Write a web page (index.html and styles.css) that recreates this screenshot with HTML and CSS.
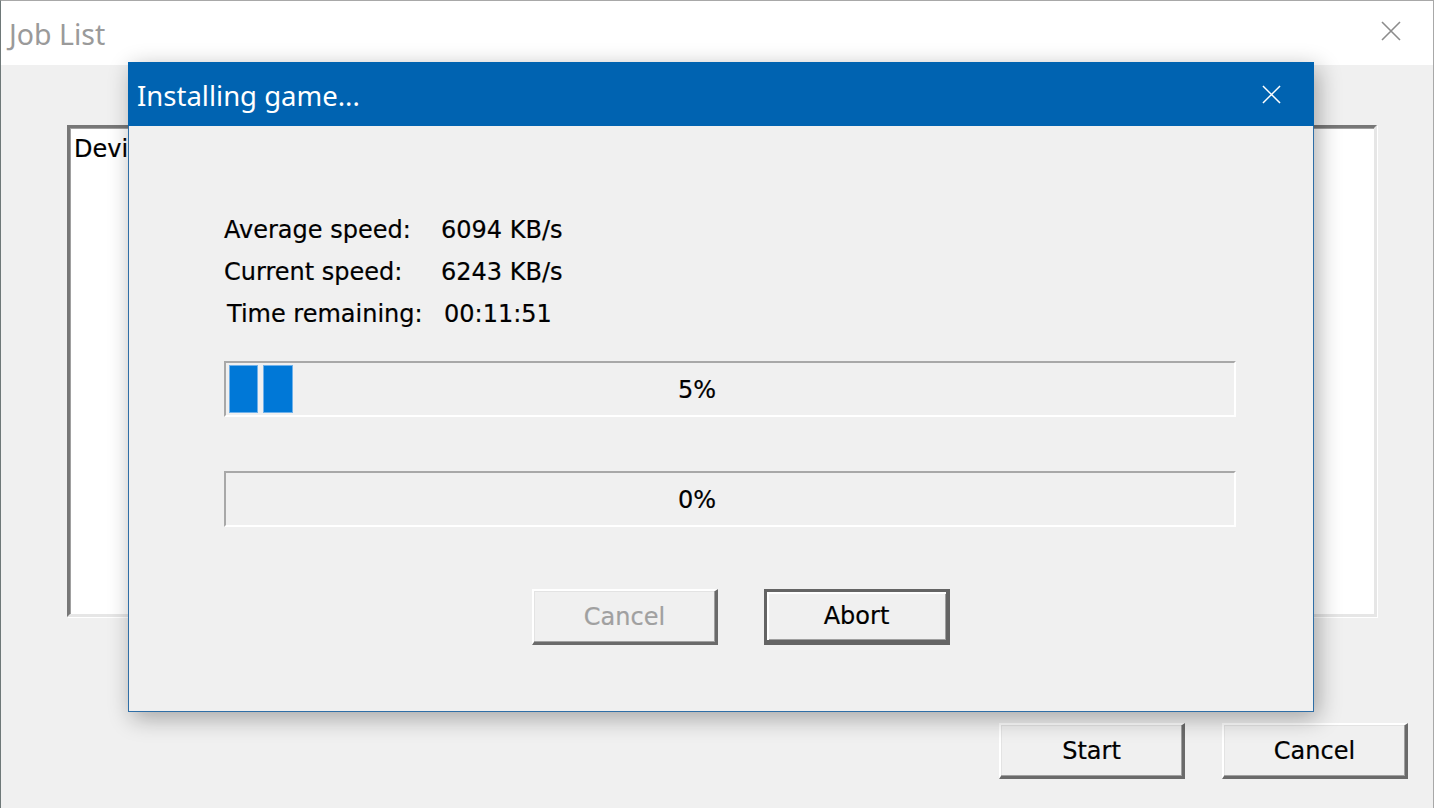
FILE: index.html
```html
<!DOCTYPE html>
<html lang="en">
<head>
<meta charset="utf-8">
<title>Job List</title>
<link rel="stylesheet" href="styles.css">
</head>
<body>
<div class="window">
  <div class="titlebar">
    <span class="title">Job List</span>
    <svg class="close" viewBox="0 0 20 20" width="20" height="20"><path d="M1 1L19 19M19 1L1 19" stroke="#8c8c8c" stroke-width="1.6" fill="none"/></svg>
  </div>
  <div class="client">
    <div class="listbox"><span class="list-item">Device</span></div>
    <div class="actions">
      <button class="btn">Start</button>
      <button class="btn">Cancel</button>
    </div>
  </div>

  <div class="dialog">
    <div class="dlg-titlebar">
      <span class="dlg-title">Installing game...</span>
      <svg class="dlg-close" viewBox="0 0 20 20" width="19" height="19"><path d="M1 1L19 19M19 1L1 19" stroke="#ffffff" stroke-width="1.6" fill="none"/></svg>
    </div>
    <div class="dlg-body">
      <div class="stats">
        <span class="label">Average speed:</span><span class="value">6094 KB/s</span>
        <span class="label">Current speed:</span><span class="value">6243 KB/s</span>
        <span class="label shift">Time remaining:</span><span class="value shift">00:11:51</span>
      </div>
      <div class="progress">
        <div class="blocks"><span class="block"></span><span class="block wide"></span></div>
        <span class="pct">5%</span>
      </div>
      <div class="progress second">
        <span class="pct">0%</span>
      </div>
      <div class="dlg-actions">
        <button class="btn disabled">Cancel</button>
        <button class="btn default">Abort</button>
      </div>
    </div>
  </div>
</div>
</body>
</html>
```

FILE: styles.css
```css
html, body {
  margin: 0;
  padding: 0;
  width: 1434px;
  height: 808px;
  overflow: hidden;
  background: #f0f0f0;
}

.window {
  position: relative;
  width: 1434px;
  height: 808px;
  box-sizing: border-box;
  border-top: 1px solid #a8a8a8;
  border-left: 1px solid #6e7878;
  border-right: 1px solid #a8a8a8;
  display: flex;
  flex-direction: column;
  font-family: "DejaVu Sans", sans-serif;
  -webkit-text-stroke: 0.2px currentColor;
}

.titlebar {
  height: 64px;
  background: #ffffff;
  display: flex;
  align-items: center;
  justify-content: space-between;
  padding: 0 32px 0 8px;
  flex: none;
}

.title {
  font-family: "Noto Sans", "Open Sans", sans-serif;
  font-size: 28.5px;
  color: #9a9a9a;
  margin-top: 1px;
  -webkit-text-stroke: 0;
}

.close { margin-top: -4px; }

.client {
  flex: 1;
  background: #f0f0f0;
  display: flex;
  flex-direction: column;
  padding: 60px 25px 0 66px;
}

.listbox {
  width: 1310px;
  height: 492px;
  box-sizing: border-box;
  background: #ffffff;
  border-top: 3px solid #777;
  border-left: 3px solid #777;
  border-right: 3px solid #e6e6e6;
  border-bottom: 3px solid #e6e6e6;
  box-shadow: inset 1px 1px 0 #a0a0a0, 1px 1px 0 #ffffff;
  padding: 7px 4px;
}

.list-item {
  font-size: 24px;
  color: #000;
}

.actions {
  display: flex;
  justify-content: flex-end;
  gap: 37px;
  margin-top: 106px;
}

.btn {
  width: 186px;
  height: 56px;
  box-sizing: border-box;
  background: #f0f0f0;
  font-family: "DejaVu Sans", sans-serif;
  font-size: 24px;
  color: #000;
  -webkit-text-stroke: 0.2px currentColor;
  border: none;
  border-top: 2px solid #ffffff;
  border-left: 2px solid #ffffff;
  border-right: 3px solid #6a6a6a;
  border-bottom: 3px solid #6a6a6a;
  box-shadow: inset -1px -1px 0 #a0a0a0, inset 1px 1px 0 #e3e3e3;
  padding: 0;
  margin: 0;
}

.btn.disabled {
  color: #a0a0a0;
}

.btn.default {
  border: 3px solid #646464;
  border-right-width: 4px;
  border-bottom-width: 5px;
  box-shadow: inset 2px 2px 0 #ffffff, inset -1px -1px 0 #a0a0a0;
}

/* modal progress dialog floating over the window */
.dialog {
  position: absolute;
  left: 127px;
  top: 61px;
  width: 1186px;
  height: 650px;
  box-sizing: border-box;
  border: 1px solid #2f6ea6;
  background: #f0f0f0;
  box-shadow: 4px 6px 22px rgba(0, 0, 0, 0.32);
  display: flex;
  flex-direction: column;
}

.dlg-titlebar {
  height: 64px;
  background: #0063b1;
  display: flex;
  align-items: center;
  justify-content: space-between;
  padding: 0 33px 0 9px;
  flex: none;
  margin: -1px -1px 0 -1px;
}

.dlg-title {
  font-family: "Noto Sans", "Open Sans", sans-serif;
  font-size: 27.5px;
  color: #ffffff;
  margin-top: 3px;
  -webkit-text-stroke: 0;
}

.dlg-body {
  flex: 1;
  padding: 83px 0 0 95px;
  display: flex;
  flex-direction: column;
}

.stats {
  display: grid;
  grid-template-columns: 217px auto;
  grid-auto-rows: 42px;
  align-items: center;
  font-size: 24px;
  color: #000;
}

.shift { margin-left: 3px; }

.progress {
  position: relative;
  width: 1012px;
  height: 56px;
  box-sizing: border-box;
  margin-top: 26px;
  border-top: 2px solid #a8a8a8;
  border-left: 2px solid #a8a8a8;
  border-right: 2px solid #ffffff;
  border-bottom: 2px solid #ffffff;
  display: flex;
  align-items: center;
  justify-content: center;
  padding-right: 66px;
}

.progress.second { margin-top: 54px; }

.blocks {
  position: absolute;
  left: 3px;
  top: 2px;
  display: flex;
  gap: 5px;
}

.block {
  width: 29px;
  height: 48px;
  box-sizing: border-box;
  background: #0078d7;
  border: 1px solid #6fb1ea;
}

.block.wide { width: 30px; }

.pct {
  font-size: 24px;
  color: #000;
  position: relative;
  top: 1px;
}

.dlg-actions {
  display: flex;
  gap: 46px;
  margin-top: 62px;
  padding-left: 308px;
}
```
